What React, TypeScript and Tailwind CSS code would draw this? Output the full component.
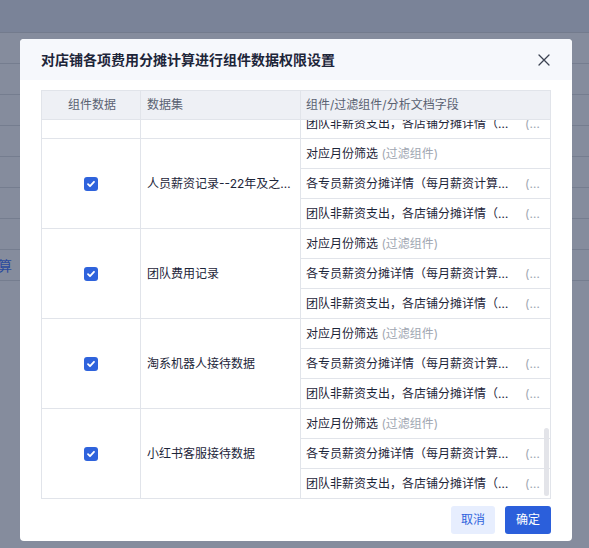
import React from "react";

type Field = { name: string; tag?: string; kind?: "filter" | "doc" };

const FIELDS: Field[] = [
  { name: "对应月份筛选", tag: "(过滤组件)", kind: "filter" },
  { name: "各专员薪资分摊详情（每月薪资计算表）", kind: "doc" },
  { name: "团队非薪资支出，各店铺分摊详情（每月）", kind: "doc" },
];

const DATASETS = [
  "人员薪资记录--22年之前",
  "人员薪资记录--22年及之后的数据",
  "团队费用记录",
  "淘系机器人接待数据",
  "小红书客服接待数据",
];

const FONT = { fontFamily: 'Inter, "Noto Sans CJK SC", "Noto Sans", sans-serif' };

function Check() {
  return (
    <span className="grid h-[14px] w-[14px] place-items-center rounded-[3px] bg-[#2f63dc]">
      <svg width="10" height="10" viewBox="0 0 10 10" fill="none">
        <path
          d="M2 5.2l2 2 4-4.4"
          stroke="#fff"
          strokeWidth="1.8"
          strokeLinecap="round"
          strokeLinejoin="round"
        />
      </svg>
    </span>
  );
}

function FieldCell({ f, last }: { f: Field; last: boolean }) {
  return (
    <div
      className={`flex flex-1 items-center pl-[5px] ${last ? "" : "border-b border-[#e1e4ea]"}`}
    >
      {f.kind === "filter" ? (
        <span className="text-[#1d2539]">
          {f.name} <span className="text-[#a1a7b2]">{f.tag}</span>
        </span>
      ) : (
        <>
          <span className="w-[205px] truncate text-[#1d2539]">{f.name}</span>
          <span className="ml-[14px] text-[#a1a7b2]">(…</span>
        </>
      )}
    </div>
  );
}

function Group({ name, checked }: { name: string; checked: boolean }) {
  return (
    <div className="flex h-[90px] border-b border-[#e1e4ea]">
      <div className="flex w-[99px] shrink-0 items-center justify-center border-r border-[#e1e4ea]">
        {checked && <Check />}
      </div>
      <div className="flex w-[160px] shrink-0 items-center border-r border-[#e1e4ea] pl-[6px] pr-[1px]">
        <span className="truncate text-[#1d2539]">{name}</span>
      </div>
      <div className="flex min-w-0 flex-1 flex-col">
        {FIELDS.map((f, i) => (
          <FieldCell key={i} f={f} last={i === FIELDS.length - 1} />
        ))}
      </div>
    </div>
  );
}

export default function App() {
  return (
    <div className="relative h-screen w-full overflow-hidden bg-[#858c9d]" style={FONT}>
      {/* page behind the mask */}
      <div className="h-[33px] border-b border-[#737b8d] bg-[#7a8398]" />
      {Array.from({ length: 8 }).map((_, i) => (
        <div key={i} className="flex h-[31px] items-center border-b border-[#757d8f]">
          {i === 7 && (
            <span className="-ml-[2px] text-[14px] text-[#2b4a9e]">算</span>
          )}
        </div>
      ))}

      {/* dialog */}
      <div className="absolute left-[20px] top-[39px] flex h-[502px] w-[552px] flex-col rounded-[4px] bg-white text-[12px]">
        <div className="flex h-[41px] shrink-0 items-center justify-between rounded-t-[4px] bg-[#f6f8fc] pl-[21px] pr-[22px]">
          <h2 className="text-[14px] font-bold text-[#1d2539]">
            对店铺各项费用分摊计算进行组件数据权限设置
          </h2>
          <svg width="12" height="12" viewBox="0 0 12 12" fill="none">
            <path
              d="M1 1l10 10M11 1L1 11"
              stroke="#3b4252"
              strokeWidth="1.3"
              strokeLinecap="round"
            />
          </svg>
        </div>

        <div className="px-[21px] pt-[10px]">
          <div className="border-x border-t border-[#e1e4ea]">
            <div className="flex h-[29px] border-b border-[#e1e4ea] bg-[#eef0f5] text-[#5a6272]">
              <div className="flex w-[99px] shrink-0 items-center justify-center border-r border-[#e1e4ea] pl-[2px]">
                组件数据
              </div>
              <div className="flex w-[160px] shrink-0 items-center border-r border-[#e1e4ea] px-[6px]">
                数据集
              </div>
              <div className="flex flex-1 items-center pl-[5px]">
                组件/过滤组件/分析文档字段
              </div>
            </div>
            <div className="relative h-[379px] overflow-hidden">
              <div className="-mt-[71px]">
                {DATASETS.map((d, i) => (
                  <Group key={d} name={d} checked={i > 0} />
                ))}
              </div>
              <div className="absolute right-[1px] top-[308px] h-[68px] w-[5px] rounded-full bg-[#e3e4e9]" />
            </div>
          </div>
        </div>

        <div className="flex justify-end gap-[10px] px-[21px] pt-[7px]">
          <button
            type="button"
            className="h-[28px] w-[44px] rounded-[3px] bg-[#e7eefe] text-[12px] text-[#2f63dc]"
          >
            取消
          </button>
          <button
            type="button"
            className="h-[28px] w-[46px] rounded-[3px] bg-[#2b5fdb] text-[12px] text-white"
          >
            确定
          </button>
        </div>
      </div>
    </div>
  );
}
